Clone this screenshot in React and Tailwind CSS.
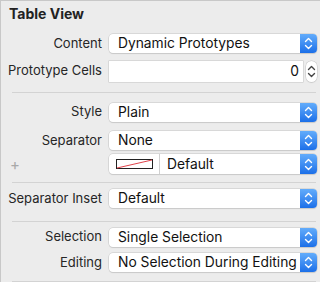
const font = { fontFamily: "Inter, 'Noto Sans', sans-serif" };

function Chevrons({ color = "white" }) {
  return (
    <svg width="9" height="13" viewBox="0 0 9 13" fill="none" stroke={color} strokeWidth="1.4" strokeLinecap="round" strokeLinejoin="round">
      <path d="M1.5 4.5 L4.5 1.5 L7.5 4.5" />
      <path d="M1.5 8.5 L4.5 11.5 L7.5 8.5" />
    </svg>
  );
}

function Popup({ children, className = "" }) {
  return (
    <div className={`flex-1 flex h-[19px] rounded-[4px] bg-white shadow-[0_0_0_0.5px_#c4c4c4,0_1px_1px_rgba(0,0,0,0.12)] ${className}`}>
      <div className="flex-1 flex items-center pl-[9px] text-[13.8px] text-[#111] whitespace-nowrap overflow-hidden">{children}</div>
      <div className="w-[17px] rounded-r-[4px] bg-gradient-to-b from-[#62acfb] to-[#1b6fe8] flex items-center justify-center">
        <Chevrons />
      </div>
    </div>
  );
}

function Row({ label, children, className = "" }) {
  return (
    <div className={`flex items-center ${className}`}>
      <div className="w-[101px] text-right text-[13px] text-[#262626] whitespace-nowrap">{label}</div>
      <div className="ml-[7px] mr-[3px] flex-1 flex items-center">{children}</div>
    </div>
  );
}

function Line({ className = "" }) {
  return <div className={`ml-[11px] mr-[4px] h-px bg-[#d3d3d3] ${className}`} />;
}

export default function App() {
  return (
    <div style={font} className="w-[320px] h-[282px] overflow-hidden bg-[#ececec] border-t border-l border-[#c8c8c8] flex flex-col">
      <div className="pl-[8px] pt-[5px] text-[14px] font-bold text-[#222] leading-[16px]">Table View</div>
      <Row label="Content" className="mt-[12px]">
        <Popup>Dynamic Prototypes</Popup>
      </Row>
      <Row label="Prototype Cells" className="mt-[7px]">
        <div className="flex-1 h-[21px] bg-white shadow-[0_0_0_0.5px_#c4c4c4] flex items-center justify-end pr-[4px] text-[13.8px] text-[#111]">0</div>
        <div className="ml-[3px] w-[11px] h-[21px] rounded-full bg-white shadow-[0_0_0_0.5px_#c4c4c4,0_1px_1px_rgba(0,0,0,0.1)] flex items-center justify-center">
          <Chevrons color="#444" />
        </div>
      </Row>
      <Line className="mt-[10px]" />
      <Row label="Style" className="mt-[10px]">
        <Popup>Plain</Popup>
      </Row>
      <Row label="Separator" className="mt-[9px]">
        <Popup>None</Popup>
      </Row>
      <div className="flex items-center mt-[4px]">
        <div className="w-[101px] pl-[9px] text-[15px] text-[#a8a8a8] leading-none">+</div>
        <div className="ml-[7px] mr-[3px] flex-1 flex h-[20px] rounded-[4px] bg-white shadow-[0_0_0_0.5px_#c4c4c4,0_1px_1px_rgba(0,0,0,0.12)]">
          <div className="w-[51px] flex items-center justify-center border-r border-[#d0d0d0]">
            <svg width="37" height="10" viewBox="0 0 37 10">
              <rect x="0.5" y="0.5" width="36" height="9" fill="white" stroke="#222" />
              <line x1="1" y1="9" x2="36" y2="1" stroke="#e0434b" strokeWidth="1" />
            </svg>
          </div>
          <div className="flex-1 flex items-center pl-[7px] text-[13.8px] text-[#111]">Default</div>
          <div className="w-[17px] rounded-r-[4px] bg-gradient-to-b from-[#62acfb] to-[#1b6fe8] flex items-center justify-center">
            <Chevrons />
          </div>
        </div>
      </div>
      <Line className="mt-[8px]" />
      <Row label="Separator Inset" className="mt-[6px]">
        <Popup>Default</Popup>
      </Row>
      <Line className="mt-[12px]" />
      <Row label="Selection" className="mt-[6px]">
        <Popup>Single Selection</Popup>
      </Row>
      <Row label="Editing" className="mt-[6px]">
        <Popup>No Selection During Editing</Popup>
      </Row>
      <Line className="mt-[9px]" />
    </div>
  );
}
